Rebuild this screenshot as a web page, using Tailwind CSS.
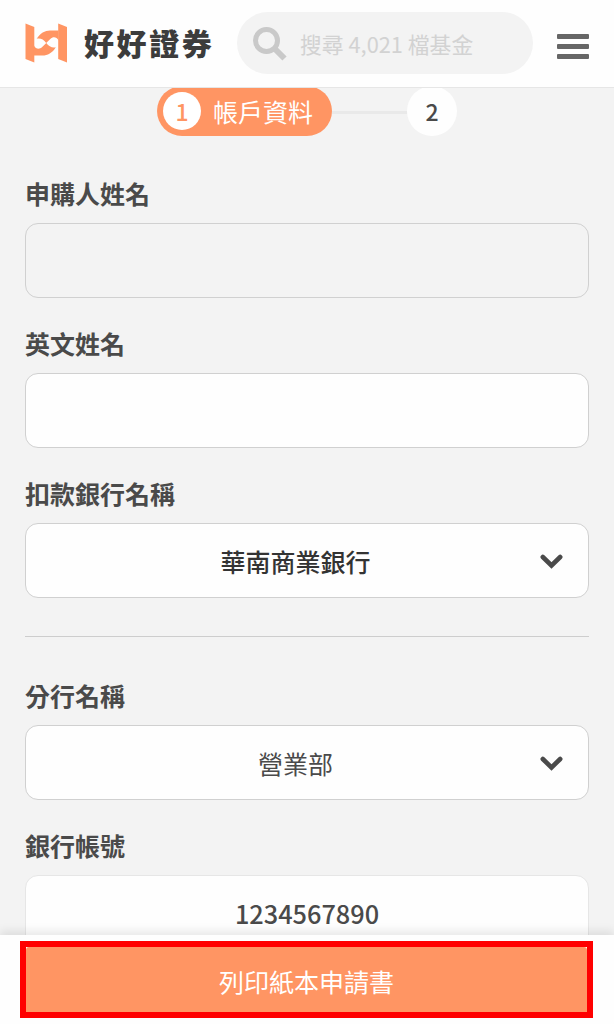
<!DOCTYPE html>
<html lang="zh-Hant">

<head>
    <meta charset="UTF-8">
    <meta name="viewport" content="width=device-width, initial-scale=1.0">
    <title>好好證券 - 帳戶資料</title>
    <script src="https://cdn.jsdelivr.net/npm/@tailwindcss/browser@4"></script>
    <style>
        body {
            font-family: 'Noto Sans CJK TC', 'Noto Sans', sans-serif;
        }
    </style>
</head>

<body class="bg-[#f3f3f3] text-[#4a4a4a] h-screen flex flex-col overflow-hidden">

    <!-- Header -->
    <header class="relative z-10 h-[88px] shrink-0 bg-[#fefefe] border-b border-[#e6e6e6] flex items-center px-[25px] pb-[1px]">
        <svg class="w-[43px] h-[40px] shrink-0" viewBox="0 0 43 40" fill="#ff9563">
            <path d="M0.5 0.5 L9.3 4 V39.5 L0.5 36 Z" />
            <path d="M33.2 0.5 L42 4 V39.5 L33.2 36 Z" />
            <path d="M11.7 15.8 C15 10.2 20 7.4 25 7.4 H33.6 V17.5 C31.5 13.5 27.8 13.6 25.3 16 L21.2 20 C18.5 16.5 15.5 15 11.7 15.8 Z" />
            <path d="M30.8 24.2 C27.5 29.8 22.5 32.6 17.5 32.6 H8.9 V22.5 C11 26.5 14.7 26.4 17.2 24 L21.3 20 C24 23.5 27 25 30.8 24.2 Z" />
        </svg>
        <h1 class="ml-[16px] -mt-[2px] w-[130px] shrink-0 text-[30px] leading-[40px] font-black tracking-[2.6px] text-[#3c3c3c] whitespace-nowrap">好好證券</h1>
        <div class="ml-[23px] w-[296px] h-[62px] shrink-0 rounded-full bg-[#f3f3f3] flex items-center pl-[16px]">
            <svg class="w-[34px] h-[34px] mt-[2px] shrink-0" viewBox="0 0 34 34" fill="none" stroke="#c9c9c9">
                <circle cx="13.5" cy="13.5" r="11" stroke-width="5" />
                <path d="M21.5 21.5 L31.5 31.5" stroke-width="6" />
            </svg>
            <span class="ml-[13px] mt-[2px] text-[21.8px] text-[#d2d2d2] whitespace-nowrap">搜尋 4,021 檔基金</span>
        </div>
        <button class="ml-auto mt-[7px] w-[32px] flex flex-col gap-[5px]">
            <span class="h-[5px] rounded-[1px] bg-[#666]"></span>
            <span class="h-[5px] rounded-[1px] bg-[#666]"></span>
            <span class="h-[5px] rounded-[1px] bg-[#666]"></span>
        </button>
    </header>

    <main class="flex-1 min-h-0 px-[25px]">
        <!-- Steps -->
        <div class="-mt-[2px] flex items-center justify-center">
            <div class="w-[175px] h-[50px] rounded-full bg-[#ff9563] flex items-center pl-[6px]">
                <span class="size-[38px] rounded-full bg-white text-[#ff9563] text-[23px] font-medium flex items-center justify-center">1</span>
                <span class="ml-[12px] mt-[2px] text-[25px] text-white">帳戶資料</span>
            </div>
            <div class="mt-[3px] w-[75px] h-[3px] bg-[#e9e9e9]"></div>
            <div class="size-[50px] rounded-full bg-[#fefefe] text-[23px] font-medium flex items-center justify-center">2</div>
        </div>

        <!-- Form -->
        <div class="mt-[38px]">
            <label class="block text-[25px] leading-[38px] font-bold">申購人姓名</label>
            <div class="mt-[11px] h-[75px] rounded-[13px] border-[1.5px] border-[#d0d0d0]"></div>
        </div>
        <div class="mt-[26px]">
            <label class="block text-[25px] leading-[38px] font-bold">英文姓名</label>
            <div class="mt-[11px] h-[75px] rounded-[13px] border-[1.5px] border-[#d0d0d0] bg-[#fefefe]"></div>
        </div>
        <div class="mt-[26px]">
            <label class="block text-[25px] leading-[38px] font-bold">扣款銀行名稱</label>
            <div class="mt-[11px] h-[75px] rounded-[13px] border-[1.5px] border-[#d0d0d0] bg-[#fefefe] flex items-center pl-[25px] pr-[25px]">
                <span class="flex-1 mt-[2px] text-center text-[25px] font-medium text-[#333]">華南商業銀行</span>
                <svg class="w-[23px] h-[15px] mt-[1px]" viewBox="0 0 23 15" fill="none" stroke="#4a4a4a" stroke-width="4.6" stroke-linecap="round">
                    <path d="M2.8 3 L11.5 11.5 L20.2 3" />
                </svg>
            </div>
        </div>

        <hr class="mt-[38px] border-t border-[#cdcdcd]">

        <div class="mt-[39px]">
            <label class="block text-[25px] leading-[38px] font-bold">分行名稱</label>
            <div class="mt-[11px] h-[75px] rounded-[13px] border-[1.5px] border-[#d0d0d0] bg-[#fefefe] flex items-center pl-[25px] pr-[25px]">
                <span class="flex-1 mt-[2px] text-center text-[25px]">營業部</span>
                <svg class="w-[23px] h-[15px] mt-[1px]" viewBox="0 0 23 15" fill="none" stroke="#4a4a4a" stroke-width="4.6" stroke-linecap="round">
                    <path d="M2.8 3 L11.5 11.5 L20.2 3" />
                </svg>
            </div>
        </div>
        <div class="mt-[26px]">
            <label class="block text-[25px] leading-[38px] font-bold">銀行帳號</label>
            <div class="mt-[11px] h-[75px] rounded-[13px] border-[1.5px] border-[#e6e6e6] bg-[#fefefe] flex items-center justify-center pt-[2px] text-[25.3px] font-medium">1234567890</div>
        </div>
    </main>

    <!-- Bottom action -->
    <footer class="relative z-10 h-[89px] shrink-0 bg-[#fefefe] shadow-[0_-4px_9px_rgba(0,0,0,0.09)] pt-[6px] pl-[20px] pr-[21px]">
        <div class="h-[77px] border-[6px] border-[#ff0000]">
            <button class="w-full h-full rounded-t-[3px] bg-[#ff9563] text-white text-[25px] flex items-center justify-center pt-[5px]">列印紙本申請書</button>
        </div>
    </footer>

</body>

</html>
